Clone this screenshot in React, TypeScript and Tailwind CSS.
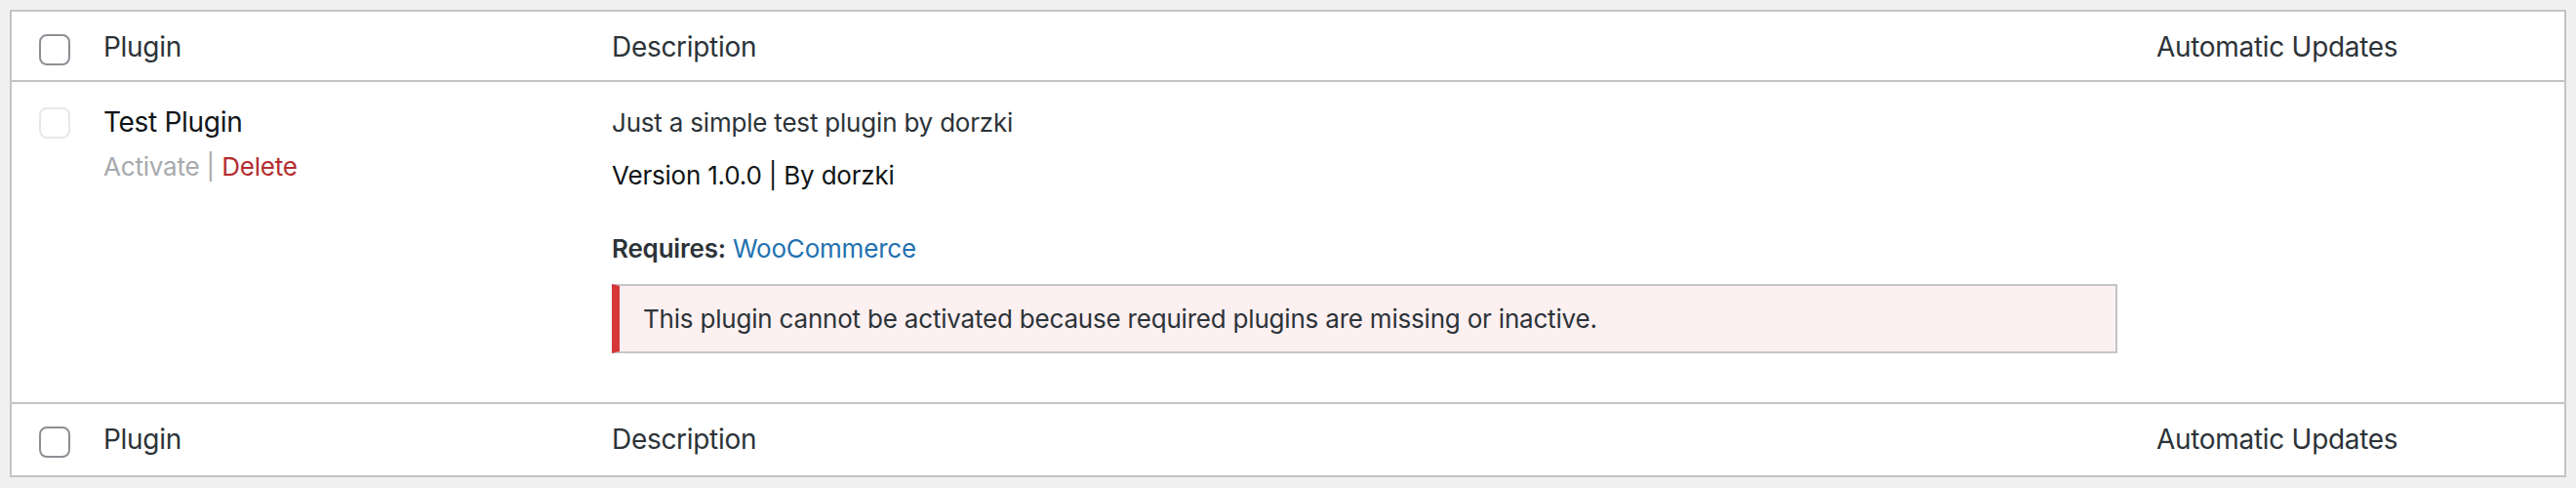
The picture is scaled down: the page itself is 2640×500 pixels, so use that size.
import React from "react";

const font = { fontFamily: "Inter, 'Noto Sans', sans-serif" };

function HeadRow({ top }: { top: boolean }) {
  return (
    <div
      className={
        "grid grid-cols-[74px_521px_1583px_1fr] " +
        (top ? "h-[72px] border-b-2 border-[#c3c4c7]" : "h-[75px] border-t-2 border-[#c3c4c7]")
      }
    >
      <div className="pl-[28px] pt-[23px]">
        <div className="w-[32px] h-[32px] rounded-[8px] border-2 border-[#8c8f94] bg-white" />
      </div>
      <div className="pl-[20px] pt-[17px] text-[28px] leading-[39px] tracking-[-0.3px] text-[#2c3338]">Plugin</div>
      <div className="pl-[20px] pt-[17px] text-[28px] leading-[39px] tracking-[-0.3px] text-[#2c3338]">Description</div>
      <div className="pl-[20px] pt-[17px] text-[28px] leading-[39px] tracking-[-0.3px] text-[#2c3338]">Automatic Updates</div>
    </div>
  );
}

export default function App() {
  return (
    <div className="w-[2640px] h-[500px] bg-[#f0f0f1] pt-[10px] px-[10px]" style={font}>
      <div className="border-2 border-[#c3c4c7] bg-white">
        <HeadRow top />
        <div className="grid grid-cols-[74px_521px_1583px_1fr]">
          <div className="pl-[28px] pt-[26px]">
            <div className="w-[32px] h-[32px] rounded-[8px] border-2 border-[#e8e8e9] bg-white" />
          </div>
          <div className="pl-[20px] pt-[16px]">
            <div className="mt-[6px] text-[28px] leading-[39px] tracking-[-0.3px] text-[#101517]">Test Plugin</div>
            <div className="mt-[6px] text-[26px] leading-[39px] tracking-[-0.2px]">
              <span className="text-[#a7aaad]">Activate</span>
              <span className="text-[#a7aaad]"> | </span>
              <span className="text-[#b32d2e]">Delete</span>
            </div>
          </div>
          <div className="px-[20px] pt-[16px] pb-[16px] text-[26px] leading-[39px] tracking-[-0.2px]">
            <p className="mt-[6px] text-[#2c3338]">Just a simple test plugin by dorzki</p>
            <p className="mt-[15px] text-[#101517]">Version 1.0.0 | By dorzki</p>
            <p className="mt-[36px] text-[#2c3338]">
              <span className="font-semibold">Requires:</span>{" "}
              <span className="text-[#2271b1]">WooCommerce</span>
            </p>
            <div className="mt-[17px] mb-[34px] border-2 border-l-[8px] border-[#c3c4c7] border-l-[#d63638] bg-[#fcf0f1] pl-[24px] py-[14px]">
              <p className="text-[#2c3338]">
                This plugin cannot be activated because required plugins are missing or inactive.
              </p>
            </div>
          </div>
          <div />
        </div>
        <HeadRow top={false} />
      </div>
    </div>
  );
}
